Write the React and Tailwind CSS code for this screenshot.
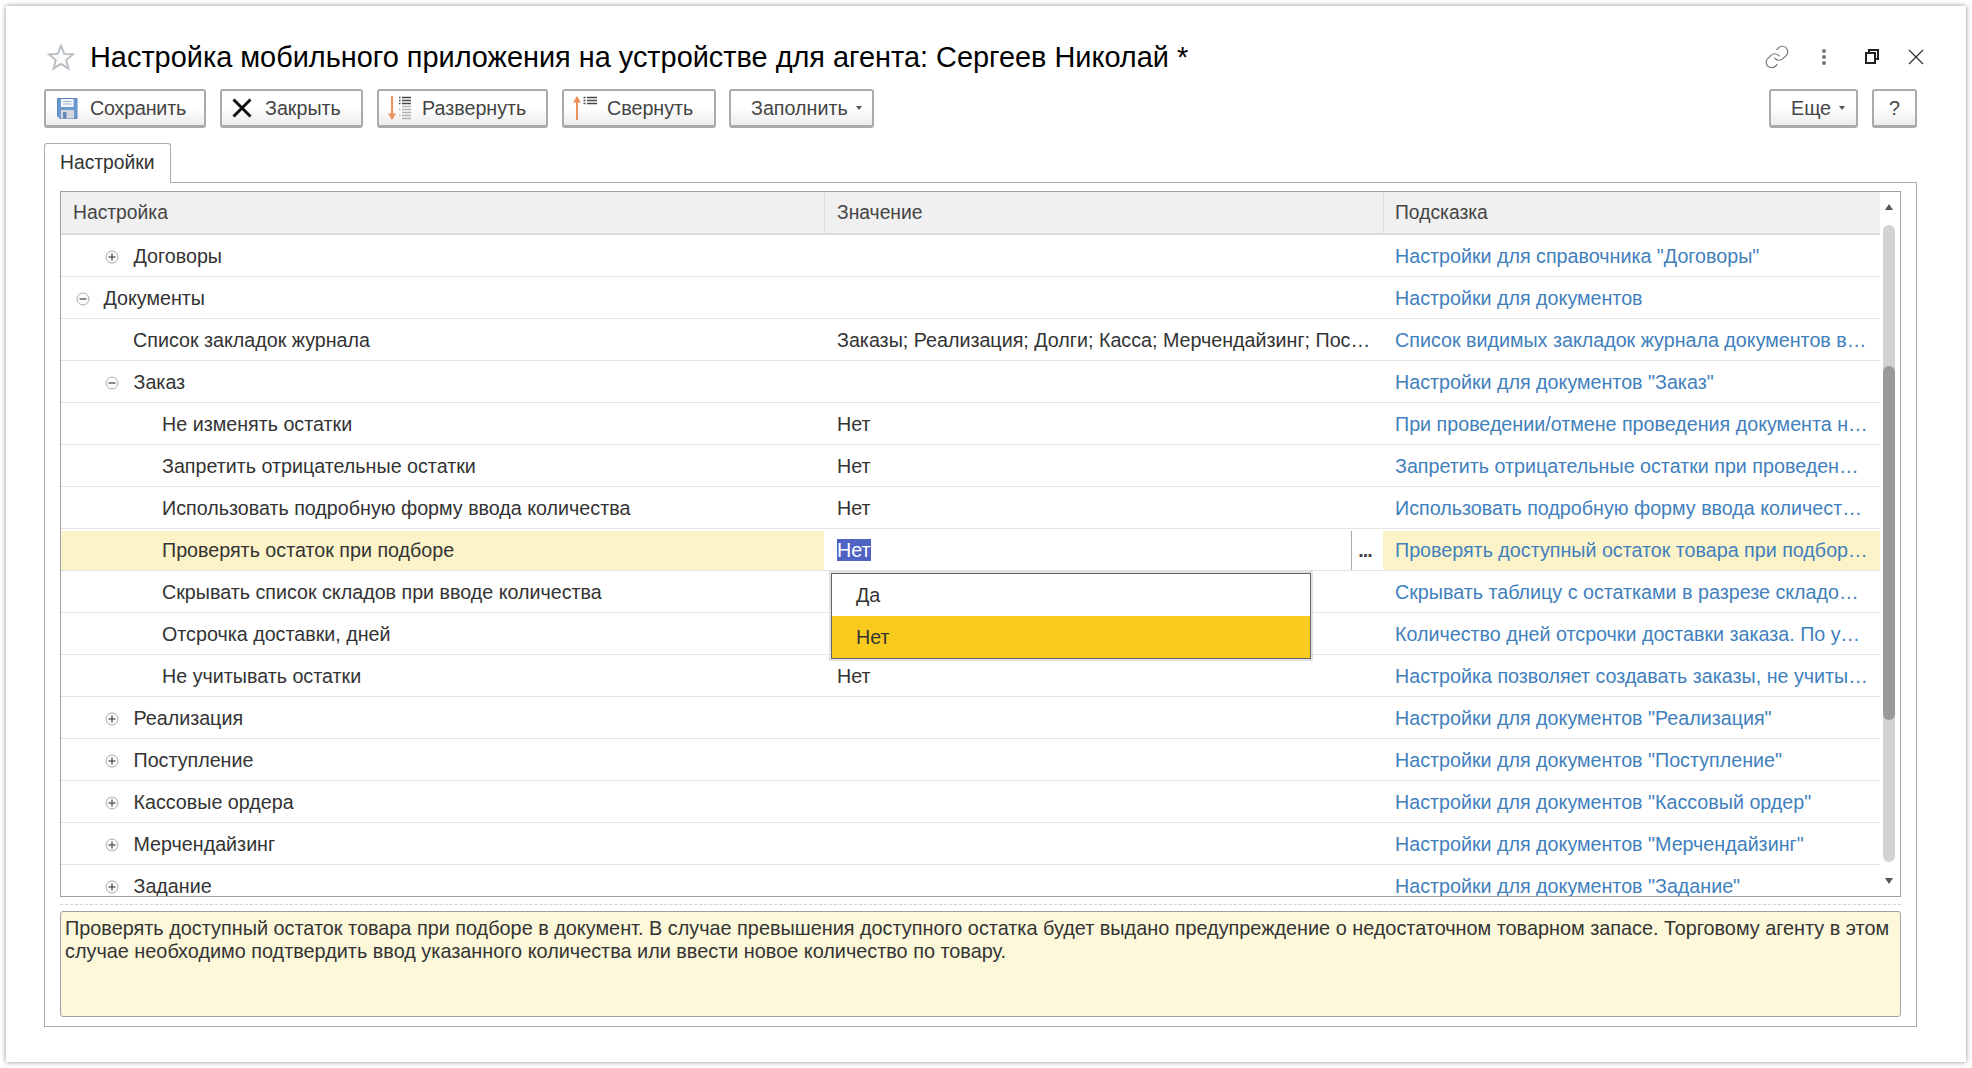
import { Link } from 'lucide-react';

const FONT = 'font-["Liberation_Sans",Arial,sans-serif]';

const ROWS = [
  { level: 1, toggle: 'plus', name: 'Договоры', hint: 'Настройки для справочника "Договоры"' },
  { level: 0, toggle: 'minus', name: 'Документы', hint: 'Настройки для документов' },
  { level: 1, name: 'Список закладок журнала', value: 'Заказы; Реализация; Долги; Касса; Мерчендайзинг; Поступление; Задания', hint: 'Список видимых закладок журнала документов в мобильном приложении агента' },
  { level: 1, toggle: 'minus', name: 'Заказ', hint: 'Настройки для документов "Заказ"' },
  { level: 2, name: 'Не изменять остатки', value: 'Нет', hint: 'При проведении/отмене проведения документа не изменять остатки' },
  { level: 2, name: 'Запретить отрицательные остатки', value: 'Нет', hint: 'Запретить отрицательные остатки при проведении документа заказ' },
  { level: 2, name: 'Использовать подробную форму ввода количества', value: 'Нет', hint: 'Использовать подробную форму ввода количества товара в заказе' },
  { level: 2, name: 'Проверять остаток при подборе', active: true, hint: 'Проверять доступный остаток товара при подборе в документ' },
  { level: 2, name: 'Скрывать список складов при вводе количества', hint: 'Скрывать таблицу с остатками в разрезе складов при вводе' },
  { level: 2, name: 'Отсрочка доставки, дней', hint: 'Количество дней отсрочки доставки заказа. По умолчанию ноль дней' },
  { level: 2, name: 'Не учитывать остатки', value: 'Нет', hint: 'Настройка позволяет создавать заказы, не учитывая остатки на складе' },
  { level: 1, toggle: 'plus', name: 'Реализация', hint: 'Настройки для документов "Реализация"' },
  { level: 1, toggle: 'plus', name: 'Поступление', hint: 'Настройки для документов "Поступление"' },
  { level: 1, toggle: 'plus', name: 'Кассовые ордера', hint: 'Настройки для документов "Кассовый ордер"' },
  { level: 1, toggle: 'plus', name: 'Мерчендайзинг', hint: 'Настройки для документов "Мерчендайзинг"' },
  { level: 1, toggle: 'plus', name: 'Задание', hint: 'Настройки для документов "Задание"' },
];

const INDENT = { 0: 'pl-[43px]', 1: 'pl-[72px]', 2: 'pl-[101px]' };

const Star = () => (
  <svg width="28" height="28" viewBox="0 0 26 26">
    <path d="M13 2.500l3 7.600 8.200.5-6.300 5.200 2 8-6.900-4.400-6.900 4.400 2-8-6.300-5.200 8.200-.5z" fill="#fbfbfb" stroke="#b8bec4" strokeWidth="1.800" />
  </svg>
);

const SaveIcon = () => (
  <svg width="21" height="21" viewBox="0 0 21 21">
    <path d="M0.500 0.500h19.500v20H3l-2.500-2.500z" fill="#6c9bd2" stroke="#5a86bb" />
    <rect x="4" y="1" width="12.500" height="8" fill="#f4f6f8" />
    <path d="M6 3.500h8.500M6 6h8.500" stroke="#9db6d3" />
    <rect x="4" y="12" width="13" height="8.500" fill="#d3d6da" />
    <rect x="6" y="14" width="3.500" height="6.500" fill="#5f88b8" />
  </svg>
);

const CloseIcon = () => (
  <svg width="20" height="20" viewBox="0 0 20 20">
    <path d="M1.500 1.500l17 17M18.500 1.500l-17 17" stroke="#111" strokeWidth="3" />
  </svg>
);

const ExpandIcon = () => (
  <svg width="24" height="26" viewBox="0 0 24 26">
    <path d="M4 1v21" stroke="#f2905c" strokeWidth="2" />
    <path d="M0 18.500h8L4 25z" fill="#f2905c" />
    <path d="M14 2.500h9M14 5.500h9M14 8.500h9" stroke="#4a4a4a" strokeWidth="1.500" />
    <path d="M11 2.500h1.500M11 5.500h1.500M11 8.500h1.500" stroke="#4a4a4a" strokeWidth="1.500" />
    <path d="M14 11.500h9M14 14.500h9M14 17.500h9M14 20.500h9M14 23.500h9M11 14.500h1.500M11 20.500h1.500" stroke="#b0b0b0" strokeWidth="1.500" />
  </svg>
);

const CollapseIcon = () => (
  <svg width="24" height="26" viewBox="0 0 24 26">
    <path d="M4 25V4" stroke="#f2905c" strokeWidth="2" />
    <path d="M0 7.500h8L4 1z" fill="#f2905c" />
    <path d="M14 2.500h10M14 5.500h10M14 8.500h10M10.500 2.500h2M10.500 5.500h2M10.500 8.500h2" stroke="#4a4a4a" strokeWidth="1.500" />
  </svg>
);

const Toggle = ({ kind }) => (
  <svg width="14" height="14" viewBox="0 0 14 14" className="shrink-0">
    <circle cx="7" cy="7" r="6" fill="#fafafa" stroke="#aeaeae" />
    <path d={kind === 'plus' ? 'M3.500 7h7M7 3.500v7' : 'M3.500 7h7'} stroke="#666" strokeWidth="1.500" />
  </svg>
);

const Caret = () => <span className="ml-2 h-0 w-0 border-x-[3.500px] border-t-[4px] border-x-transparent border-t-[#555]" />;

function Btn({ icon, caret, className, children }) {
  return (
    <button className={`flex h-[39px] items-center rounded-[3px] border-2 border-b-[3px] border-[#ababab] bg-gradient-to-b from-white from-50% to-[#ececec] text-[19.700px] text-[#444] ${className}`}>
      {icon}
      <span className="pt-[2px]">{children}</span>
      {caret && <Caret />}
    </button>
  );
}

function Row({ row }) {
  const bg = row.active ? 'bg-[#fdf3c9]' : '';
  const pad = row.toggle ? (row.level === 0 ? 'gap-[13.500px] pl-[15px]' : 'gap-[14.500px] pl-[44px]') : INDENT[row.level];
  return (
    <div className="flex h-[42px] shrink-0 border-b border-[#e3e3e3] text-[19.700px] text-[#333]">
      <div className={`mt-[2px] flex w-[763px] items-center ${pad} ${bg}`}>
        {row.toggle && <Toggle kind={row.toggle} />}
        <span>{row.name}</span>
      </div>
      {row.active ? (
        <div className="mt-[2px] flex w-[559px] items-center bg-white pl-[13px]">
          <span className="flex-1"><span className="bg-[#4f63c4] text-white">Нет</span></span>
          <div className="flex h-full w-[32px] items-center justify-center border-l border-[#a8a8a8] pr-[5px] font-bold tracking-tighter text-[#444]">...</div>
        </div>
      ) : (
        <div className="mt-[2px] flex w-[559px] items-center pl-[13px] pr-[6px]">
          <span className="truncate">{row.value}</span>
        </div>
      )}
      <div className={`mt-[2px] flex min-w-0 flex-1 items-center pl-[12px] pr-[12px] ${bg}`}>
        <a className="truncate text-[#3f80bd]">{row.hint}</a>
      </div>
    </div>
  );
}

export default function App() {
  return (
    <div className={`h-[1068px] bg-white p-[6px] ${FONT}`}>
      <div className="flex h-[1056px] w-[1960px] flex-col bg-white pl-[38px] pr-[49px] pt-[26px] shadow-[0_0_5px_rgba(0,0,0,0.45)]">
        <div className="-mr-[12px] flex h-[50px] items-center">
          <div className="ml-[3px] mr-[15px]"><Star /></div>
          <h1 className="flex-1 pt-[2px] text-[28.900px] text-black">Настройка мобильного приложения на устройстве для агента: Сергеев Николай *</h1>
          <div className="flex items-center pb-[1px] pr-[4px]">
            <Link size={26} strokeWidth={1.100} className="text-[#777]" />
            <div className="ml-[32px] flex flex-col gap-[2px]">
              <span className="h-[4px] w-[4px] rounded-full bg-[#777]" />
              <span className="h-[4px] w-[4px] rounded-full bg-[#777]" />
              <span className="h-[4px] w-[4px] rounded-full bg-[#777]" />
            </div>
            <svg width="14" height="15" viewBox="0 0 14 15" className="ml-[39px]">
              <path d="M4 3V1h9v9h-3" fill="none" stroke="#222" strokeWidth="2" />
              <rect x="1" y="4" width="9" height="10" fill="none" stroke="#222" strokeWidth="2" />
            </svg>
            <svg width="18" height="18" viewBox="0 0 18 18" className="ml-[28px]">
              <path d="M2 2l14 14M16 2L2 16" stroke="#333" strokeWidth="1.300" />
            </svg>
          </div>
        </div>

        <div className="mt-[7px] flex">
          <Btn className="w-[162px] pl-[11px] tracking-[-0.2px]" icon={<SaveIcon />}><span className="ml-[12px]">Сохранить</span></Btn>
          <Btn className="ml-[14px] w-[143px] pl-[10px]" icon={<CloseIcon />}><span className="ml-[13px]">Закрыть</span></Btn>
          <Btn className="ml-[14px] w-[171px] pl-[9px]" icon={<ExpandIcon />}><span className="ml-[10px]">Развернуть</span></Btn>
          <Btn className="ml-[14px] w-[154px] pl-[9px]" icon={<CollapseIcon />}><span className="ml-[10px]">Свернуть</span></Btn>
          <Btn className="ml-[13px] w-[145px] pl-[20px]" caret>Заполнить</Btn>
          <div className="flex-1" />
          <Btn className="w-[89px] pl-[20px]" caret>Еще</Btn>
          <Btn className="ml-[14px] w-[45px] justify-center">?</Btn>
        </div>

        <div className="mt-[15px] flex">
          <div className="z-10 -mb-px flex h-[40px] w-[127px] items-center rounded-t-[3px] border border-b-0 border-[#ababab] bg-white pl-[15px] text-[19.300px] text-[#333]">Настройки</div>
        </div>

        <div className="flex h-[845px] flex-col border border-[#ababab] px-[15px] pt-[8px]">
          <div className="relative flex h-[706px] shrink-0 border border-[#a0a0a0]">
            <div className="flex min-w-0 flex-1 flex-col overflow-hidden">
              <div className="flex h-[43px] shrink-0 border-b-2 border-[#dcdcdc] bg-[#f0f0f0] text-[19.300px] text-[#444]">
                <div className="flex w-[763px] items-center pl-[12px] pt-[2px]">Настройка</div>
                <div className="flex w-[559px] items-center border-l border-[#dcdcdc] pl-[12px] pt-[2px]">Значение</div>
                <div className="flex flex-1 items-center border-l border-[#dcdcdc] pl-[11px] pt-[2px]">Подсказка</div>
              </div>
              {ROWS.map(r => <Row key={r.name} row={r} />)}
            </div>

            <div className="relative w-[20px] shrink-0">
              <span className="absolute left-[5px] top-[12px] h-0 w-0 border-x-[4px] border-b-[6px] border-x-transparent border-b-[#555]" />
              <div className="absolute left-[3px] top-[33px] h-[637px] w-[12px] rounded-full bg-[#d2d2d2]">
                <div className="mt-[141px] h-[354px] rounded-full bg-[#999]" />
              </div>
              <span className="absolute bottom-[12px] left-[5px] h-0 w-0 border-x-[4px] border-t-[6px] border-x-transparent border-t-[#555]" />
            </div>

            <div className="absolute left-[768px] top-[379px] w-[484px] border-2 border-[#e2e2e2]">
              <div className="border border-[#666] bg-white text-[19.700px] text-[#333]">
                <div className="flex h-[42px] items-center pl-[24px] pt-[2px]">Да</div>
                <div className="flex h-[42px] items-center bg-[#facb1f] pl-[24px] pt-[2px]">Нет</div>
              </div>
            </div>
          </div>

          <div className="mt-[7px] border-t border-dashed border-[#d4d4d4]" />

          <div className="mt-[6px] h-[106px] rounded-[3px] border border-[#a0a0a0] bg-[#fef8da] px-[4px] pt-[5px] text-[19.850px] leading-[22.500px] text-[#333]">
            Проверять доступный остаток товара при подборе в документ. В случае превышения доступного остатка будет выдано предупреждение о недостаточном товарном запасе. Торговому агенту в этом случае необходимо подтвердить ввод указанного количества или ввести новое количество по товару.
          </div>
        </div>
      </div>
    </div>
  );
}
